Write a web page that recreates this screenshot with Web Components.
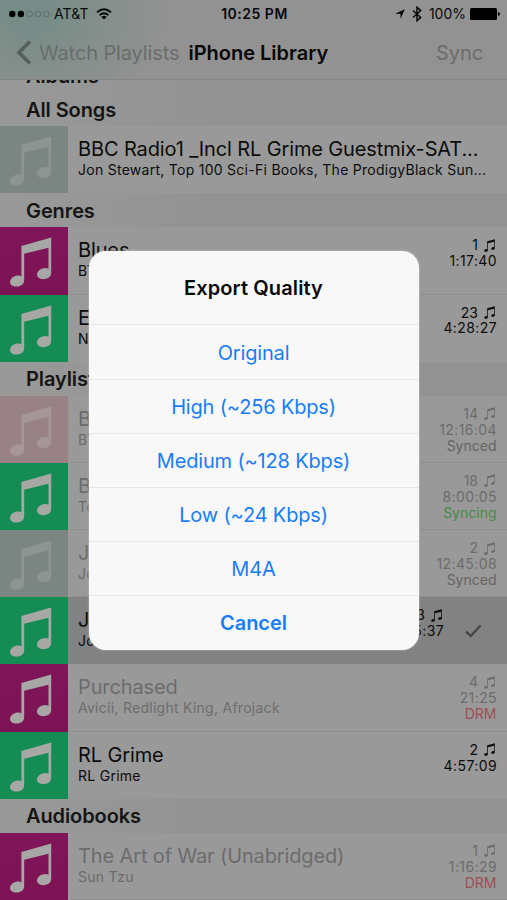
<!DOCTYPE html>
<html lang="en">
<head>
<meta charset="utf-8">
<title>iPhone Library</title>
<style>
  body {
    margin: 0;
    font-family: Inter, "Liberation Sans", sans-serif;
    background: #999;
  }
</style>
</head>
<body>
<library-app></library-app>

<script>
const define = (name, html, setup) => {
  const template = document.createElement('template');
  template.innerHTML = html;

  customElements.define(name, class extends HTMLElement {
    constructor() {
      super();
      this.attachShadow({mode: 'open'});
      this.shadowRoot.append(template.content.cloneNode(true));
    }

    connectedCallback() {
      if (setup) setup(this, this.shadowRoot);
    }
  });
};

define('music-note', `
  <style>
    :host { display: block; }
    svg { display: block; width: 100%; height: 100%; fill: currentColor; }
  </style>
  <svg viewBox="9 10 43 50">
    <path d="M21.4 18.9 51.2 10.6V45.5Q51.2 50.6 46 51.8C41 53 37 51 37 47.6 37 43.8 41.6 41 45.4 41Q47.4 41 48.5 41.8V20.7L24.2 26.8V53.2Q24.2 57.8 19.2 59.2C14 60.6 10 58.3 10 55.1 10 51.3 14.5 48.6 18.4 48.6Q20.3 48.6 21.4 49.3Z"/>
  </svg>
`);

define('status-bar', `
  <style>
    :host {
      display: grid;
      grid-template-columns: 1fr auto 1fr;
      align-items: center;
      height: 27px;
      padding: 0 7px 0 9px;
      font-size: 14px;
      color: #080a0a;
    }
    div { display: flex; align-items: center; }
    svg { display: block; }
    .dots { margin-right: 4px; }
    .carrier { letter-spacing: 0.1px; }
    .wifi { margin-left: 7px; }
    .time { font-weight: 600; letter-spacing: 0.5px; }
    .right { justify-content: flex-end; }
    .bt { margin: 0 7px 0 7px; }
    .percent { letter-spacing: 0; margin-right: 4px; }
  </style>
  <div>
    <svg class="dots" width="41" height="8" viewBox="0 0 41 8">
      <circle cx="3.3" cy="4" r="3.2"/><circle cx="11.9" cy="4" r="3.2"/>
      <g fill="none" stroke="#53605e" stroke-width=".7">
        <circle cx="20.5" cy="4" r="2.9"/><circle cx="29" cy="4" r="2.9"/><circle cx="37.5" cy="4" r="2.9"/>
      </g>
    </svg>
    <span class="carrier">AT&amp;T</span>
    <svg class="wifi" width="16" height="12" viewBox="0 0 16 12">
      <g fill="none" stroke="#080a0a" stroke-width="1.9">
        <path d="M1 4.4Q8-2 15 4.4M3.5 7.1Q8 3.2 12.5 7.1"/>
      </g>
      <path d="M5.3 8.8Q8 6.8 10.7 8.8L8 11.6Z"/>
    </svg>
  </div>
  <div class="time">10:25 PM</div>
  <div class="right">
    <svg width="10" height="10" viewBox="0 0 10 10"><path d="M9.8.3 5.5 9.8V4.7H0Z"/></svg>
    <svg class="bt" width="10" height="16" viewBox="0 0 10 16">
      <path d="M1 4.5 8.7 11.4 5 14.8V1.2L8.7 4.6 1 11.5" fill="none" stroke="#080a0a" stroke-width="1.5"/>
    </svg>
    <span class="percent">100%</span>
    <svg width="30" height="12" viewBox="0 0 30 12">
      <rect width="27" height="12" rx="1.5"/><path d="M28 4Q30 4.3 30 6T28 8Z"/>
    </svg>
  </div>
`);

define('nav-bar', `
  <style>
    :host {
      display: block;
      box-sizing: border-box;
      height: 80px;
      border-bottom: 1px solid #848484;
      background:
        radial-gradient(ellipse 140px 110px at 30px 14px, #788c87 15%, #7f8e8aaa 55%, #92929200),
        #929292;
    }
    .bar {
      display: flex;
      align-items: center;
      height: 51px;
      padding: 0 24px 0 16px;
      font-size: 20px;
      color: #6a6d6c;
    }
    svg { display: block; margin-right: 7px; }
    .title { margin-left: 9px; font-weight: 600; color: #080808; }
    .back { letter-spacing: -0.12px; }
    .action { margin-left: auto; letter-spacing: -0.1px; }
  </style>
  <status-bar></status-bar>
  <div class="bar">
    <svg width="16" height="25" viewBox="0 0 16 25">
      <path d="M14 1.5 3 12.5 14 23.5" fill="none" stroke="#55605d" stroke-width="3.6"/>
    </svg>
    <span class="back"><slot name="back"></slot></span>
    <span class="title"><slot></slot></span>
    <span class="action"><slot name="action"></slot></span>
  </div>
`);

define('section-header', `
  <style>
    :host {
      display: flex;
      align-items: center;
      flex: none;
      box-sizing: border-box;
      height: 34px;
      padding: 1px 0 0 26px;
      background: linear-gradient(90deg, #999, #929292 45%);
      color: #151515;
      font-size: 20px;
      font-weight: 600;
      letter-spacing: -0.1px;
    }
  </style>
  <slot></slot>
`);

define('track-row', `
  <style>
    :host {
      display: flex;
      flex: none;
      height: 67.2px;
      background: #999;
      color: #0c0c0c;
    }
    :host([muted]) { color: #6c6c6c; }
    :host([selected]) { background: #828282; }
    .art {
      flex: none;
      box-sizing: border-box;
      width: 68px;
      padding: 10px 16px 7px 9px;
      color: #a7a7a5;
    }
    .art music-note { width: 43px; height: 50px; }
    :host([art=pink]) .art { background: linear-gradient(#80165a, #7c1354); }
    :host([art=green]) .art { background: #168c55; }
    :host([art=mint]) .art { background: #7b8581; color: #8d9491; }
    :host([art=rose]) .art { background: #988286; color: #a69699; }
    .body {
      display: flex;
      flex: 1;
      min-width: 0;
      margin-left: 3px;
      padding: 0 10px 0 7px;
      border-bottom: 1px solid #8e8e8e;
    }
    :host([last]) .body { border-bottom-color: transparent; }
    .text { flex: 1; min-width: 0; padding-top: 10px; white-space: nowrap; }
    h2, p { margin: 0; font-weight: 400; }
    h2 { font-size: 20px; line-height: 26px; letter-spacing: -0.13px; }
    p { margin-top: -1px; font-size: 14px; line-height: 17px; letter-spacing: 0.27px; }
    .meta {
      padding-top: 10px;
      font-size: 14px;
      line-height: 15.9px;
      text-align: right;
      white-space: nowrap;
    }
    .time { letter-spacing: 0.4px; }
    .count { display: flex; justify-content: flex-end; align-items: center; gap: 5px; }
    .count music-note { width: 13px; height: 13px; margin-right: 1px; }
    .status { margin-right: 0.5px; }
    .status[data-kind=Synced] { color: #656565; }
    .status[data-kind=Syncing] { color: #478a4b; }
    .status[data-kind=DRM] { color: #995057; }
    .check { display: none; margin: 27px 15px 0 21px; }
    :host([selected]) .check { display: block; }
  </style>
  <div class="art"><music-note></music-note></div>
  <div class="body">
    <div class="text">
      <h2></h2>
      <p></p>
    </div>
    <div class="meta"></div>
    <svg class="check" width="17" height="14" viewBox="0 0 17 14">
      <path d="M1.2 7.6 5.7 12 15.6 1.5" fill="none" stroke="#444" stroke-width="2.2"/>
    </svg>
  </div>
`, (host, root) => {
  root.querySelector('h2').textContent = host.getAttribute('name');
  root.querySelector('p').textContent = host.getAttribute('artists');
  if (!host.hasAttribute('count')) return;

  const count = document.createElement('div');
  const time = document.createElement('div');
  const status = document.createElement('div');
  count.className = 'count';
  count.append(host.getAttribute('count'), document.createElement('music-note'));
  time.className = 'time';
  time.textContent = host.getAttribute('time');
  status.className = 'status';
  status.textContent = host.getAttribute('status') || '';
  status.dataset.kind = status.textContent;
  root.querySelector('.meta').append(count, time, status);
});

define('alert-action', `
  <style>
    :host {
      display: flex;
      align-items: center;
      justify-content: center;
      box-sizing: border-box;
      height: 54.2px;
      padding-top: 1px;
      border-top: 1px solid #e7e7e9;
      color: #1a7df5;
      font-size: 20px;
      letter-spacing: -0.17px;
    }
    :host([bold]) { font-weight: 600; letter-spacing: 0; }
  </style>
  <slot></slot>
`);

define('alert-dialog', `
  <style>
    :host {
      display: block;
      width: 330px;
      border-radius: 17px;
      overflow: hidden;
      background: #f8f8f8;
      box-shadow: 0 0 2px #d0d0d0;
    }
    h1 {
      display: flex;
      align-items: center;
      justify-content: center;
      height: 73px;
      margin: 0;
      font-size: 20px;
      font-weight: 600;
      letter-spacing: 0.1px;
      color: #080808;
    }
  </style>
  <h1><slot name="title"></slot></h1>
  <slot></slot>
`);

define('library-app', `
  <style>
    :host {
      display: flex;
      flex-direction: column;
      position: relative;
      height: 900px;
      overflow: hidden;
    }
    nav-bar { flex: none; }
    /* scrolled list: the first header slides under the nav bar */
    main {
      display: flex;
      flex: 1;
      flex-direction: column;
      justify-content: flex-end;
      min-height: 0;
      overflow: hidden;
    }
    .overlay {
      position: absolute;
      inset: 0;
      display: flex;
      align-items: center;
      justify-content: center;
      padding-top: 1px;
    }
  </style>
  <nav-bar>
    <span slot="back">Watch Playlists</span>
    iPhone Library
    <span slot="action">Sync</span>
  </nav-bar>
  <main>
    <section-header>Albums</section-header>
    <section-header>All Songs</section-header>
    <track-row art="mint" last name="BBC Radio1 _Incl RL Grime Guestmix-SAT..." artists="Jon Stewart, Top 100 Sci-Fi Books, The ProdigyBlack Sun..."></track-row>
    <section-header>Genres</section-header>
    <track-row art="pink" name="Blues" artists="BT" count="1" time="1:17:40"></track-row>
    <track-row art="green" last name="Electronic" artists="Nero" count="23" time="4:28:27"></track-row>
    <section-header>Playlists</section-header>
    <track-row art="rose" muted name="BT" artists="BT" count="14" time="12:16:04" status="Synced"></track-row>
    <track-row art="green" muted name="Books" artists="Top 100" count="18" time="8:00:05" status="Syncing"></track-row>
    <track-row art="mint" muted name="Jon" artists="Jon Stewart" count="2" time="12:45:08" status="Synced"></track-row>
    <track-row art="green" selected last name="Jon" artists="Jon Stewart" count="3" time="5:37"></track-row>
    <track-row art="pink" muted name="Purchased" artists="Avicii, Redlight King, Afrojack" count="4" time="21:25" status="DRM"></track-row>
    <track-row art="green" last name="RL Grime" artists="RL Grime" count="2" time="4:57:09"></track-row>
    <section-header>Audiobooks</section-header>
    <track-row art="pink" muted name="The Art of War (Unabridged)" artists="Sun Tzu" count="1" time="1:16:29" status="DRM"></track-row>
  </main>
  <div class="overlay">
    <alert-dialog>
      <span slot="title">Export Quality</span>
      <alert-action>Original</alert-action>
      <alert-action>High (~256 Kbps)</alert-action>
      <alert-action>Medium (~128 Kbps)</alert-action>
      <alert-action>Low (~24 Kbps)</alert-action>
      <alert-action>M4A</alert-action>
      <alert-action bold>Cancel</alert-action>
    </alert-dialog>
  </div>
`);
</script>
</body>
</html>
